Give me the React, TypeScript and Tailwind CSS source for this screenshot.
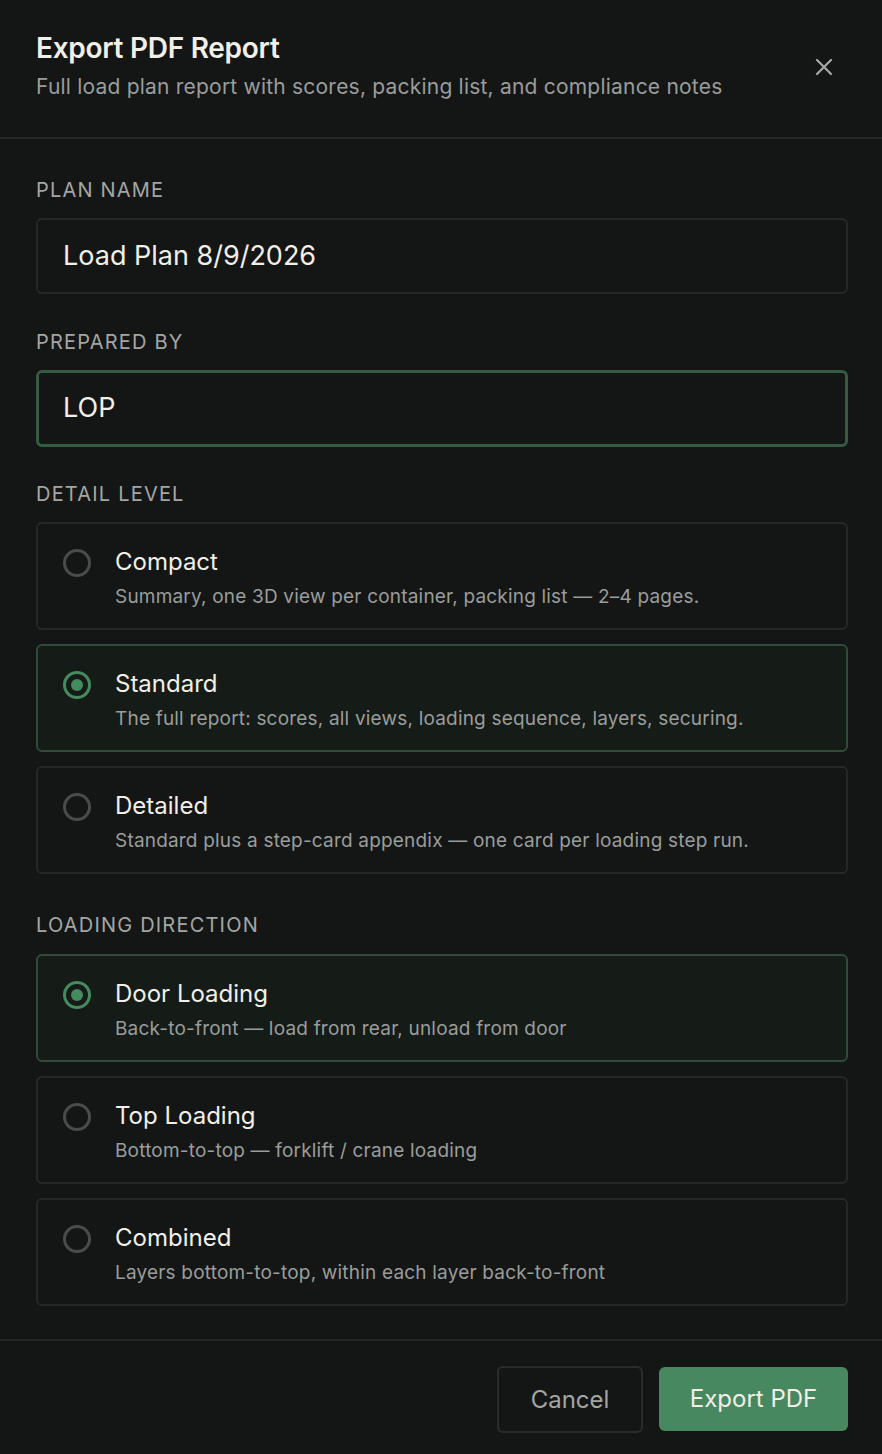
import { useState } from 'react'
import { X } from 'lucide-react'

type Option = { id: string; title: string; desc: string }

const DETAIL: Option[] = [
  { id: 'compact', title: 'Compact', desc: 'Summary, one 3D view per container, packing list — 2–4 pages.' },
  { id: 'standard', title: 'Standard', desc: 'The full report: scores, all views, loading sequence, layers, securing.' },
  { id: 'detailed', title: 'Detailed', desc: 'Standard plus a step-card appendix — one card per loading step run.' },
]

const DIRECTION: Option[] = [
  { id: 'door', title: 'Door Loading', desc: 'Back-to-front — load from rear, unload from door' },
  { id: 'top', title: 'Top Loading', desc: 'Bottom-to-top — forklift / crane loading' },
  { id: 'combined', title: 'Combined', desc: 'Layers bottom-to-top, within each layer back-to-front' },
]

function Label({ children }: { children: string }) {
  return <div className="text-[20px] tracking-[0.06em] uppercase text-[#a3a6a4] mb-[18px] leading-none">{children}</div>
}

function RadioCard({ opt, selected, onSelect }: { opt: Option; selected: boolean; onSelect: () => void }) {
  return (
    <button
      onClick={onSelect}
      className={`w-full text-left flex gap-[24px] h-[108px] px-[25px] pt-[24px] rounded-[6px] border-2 ${
        selected ? 'border-[#2f4c39] bg-[#151b17]' : 'border-[#262827] bg-[#141615]'
      }`}
    >
      <span
        className={`mt-[1px] w-[28px] h-[28px] rounded-full border-[3px] flex items-center justify-center shrink-0 ${
          selected ? 'border-[#468a5f]' : 'border-[#4a4c4b]'
        }`}
      >
        {selected && <span className="w-[12px] h-[12px] rounded-full bg-[#468a5f]" />}
      </span>
      <span className="flex flex-col">
        <span className="text-[24px] text-[#f1efe8] leading-[28px]">{opt.title}</span>
        <span className="text-[19px] tracking-[0.01em] text-[#9a9d9b] leading-[24px] mt-[9px]">{opt.desc}</span>
      </span>
    </button>
  )
}

export default function App() {
  const [detail, setDetail] = useState('standard')
  const [dir, setDir] = useState('door')

  return (
    <div className="min-h-screen bg-[#141615] font-['Inter',sans-serif] text-[#f1efe8]">
      <header className="flex items-start justify-between pl-[36px] pr-[34px] pt-[30px] h-[139px] border-b-2 border-[#252726]">
        <div>
          <h1 className="text-[28px] font-semibold leading-[36px] tracking-[-0.01em]">Export PDF Report</h1>
          <p className="text-[21px] tracking-[0.01em] text-[#9a9d9b] mt-[7px] leading-[28px]">
            Full load plan report with scores, packing list, and compliance notes
          </p>
        </div>
        <button className="mt-[23px] mr-[10px] text-[#a3a6a4]" aria-label="Close">
          <X size={28} strokeWidth={2} />
        </button>
      </header>

      <main className="pl-[36px] pr-[34px] pt-[41px] pb-[33px] flex flex-col">
        <Label>Plan name</Label>
        <div className="h-[76px] rounded-[6px] border-2 border-[#262827] flex items-center px-[25px] text-[27px]">
          Load Plan 8/9/2026
        </div>

        <div className="mt-[38px]">
          <Label>Prepared by</Label>
        </div>
        <div className="h-[77px] rounded-[6px] border-[3px] border-[#355a42] flex items-center px-[24px] text-[27px]">
          LOP
        </div>

        <div className="mt-[37px]">
          <Label>Detail level</Label>
        </div>
        <div className="flex flex-col gap-[14px]">
          {DETAIL.map((o) => (
            <RadioCard key={o.id} opt={o} selected={detail === o.id} onSelect={() => setDetail(o.id)} />
          ))}
        </div>

        <div className="mt-[41px]">
          <Label>Loading direction</Label>
        </div>
        <div className="flex flex-col gap-[14px] pt-[1px]">
          {DIRECTION.map((o) => (
            <RadioCard key={o.id} opt={o} selected={dir === o.id} onSelect={() => setDir(o.id)} />
          ))}
        </div>
      </main>

      <footer className="border-t-2 border-[#252726] flex justify-end gap-[16px] px-[34px] pt-[25px] pb-[21px]">
        <button className="w-[146px] h-[67px] rounded-[6px] border-2 border-[#2a2c2b] text-[24px] text-[#a3a6a4]">
          Cancel
        </button>
        <button className="w-[189px] h-[64px] mt-[1px] rounded-[6px] bg-[#478860] text-[24px] text-[#f1efe8]">
          Export PDF
        </button>
      </footer>
    </div>
  )
}
